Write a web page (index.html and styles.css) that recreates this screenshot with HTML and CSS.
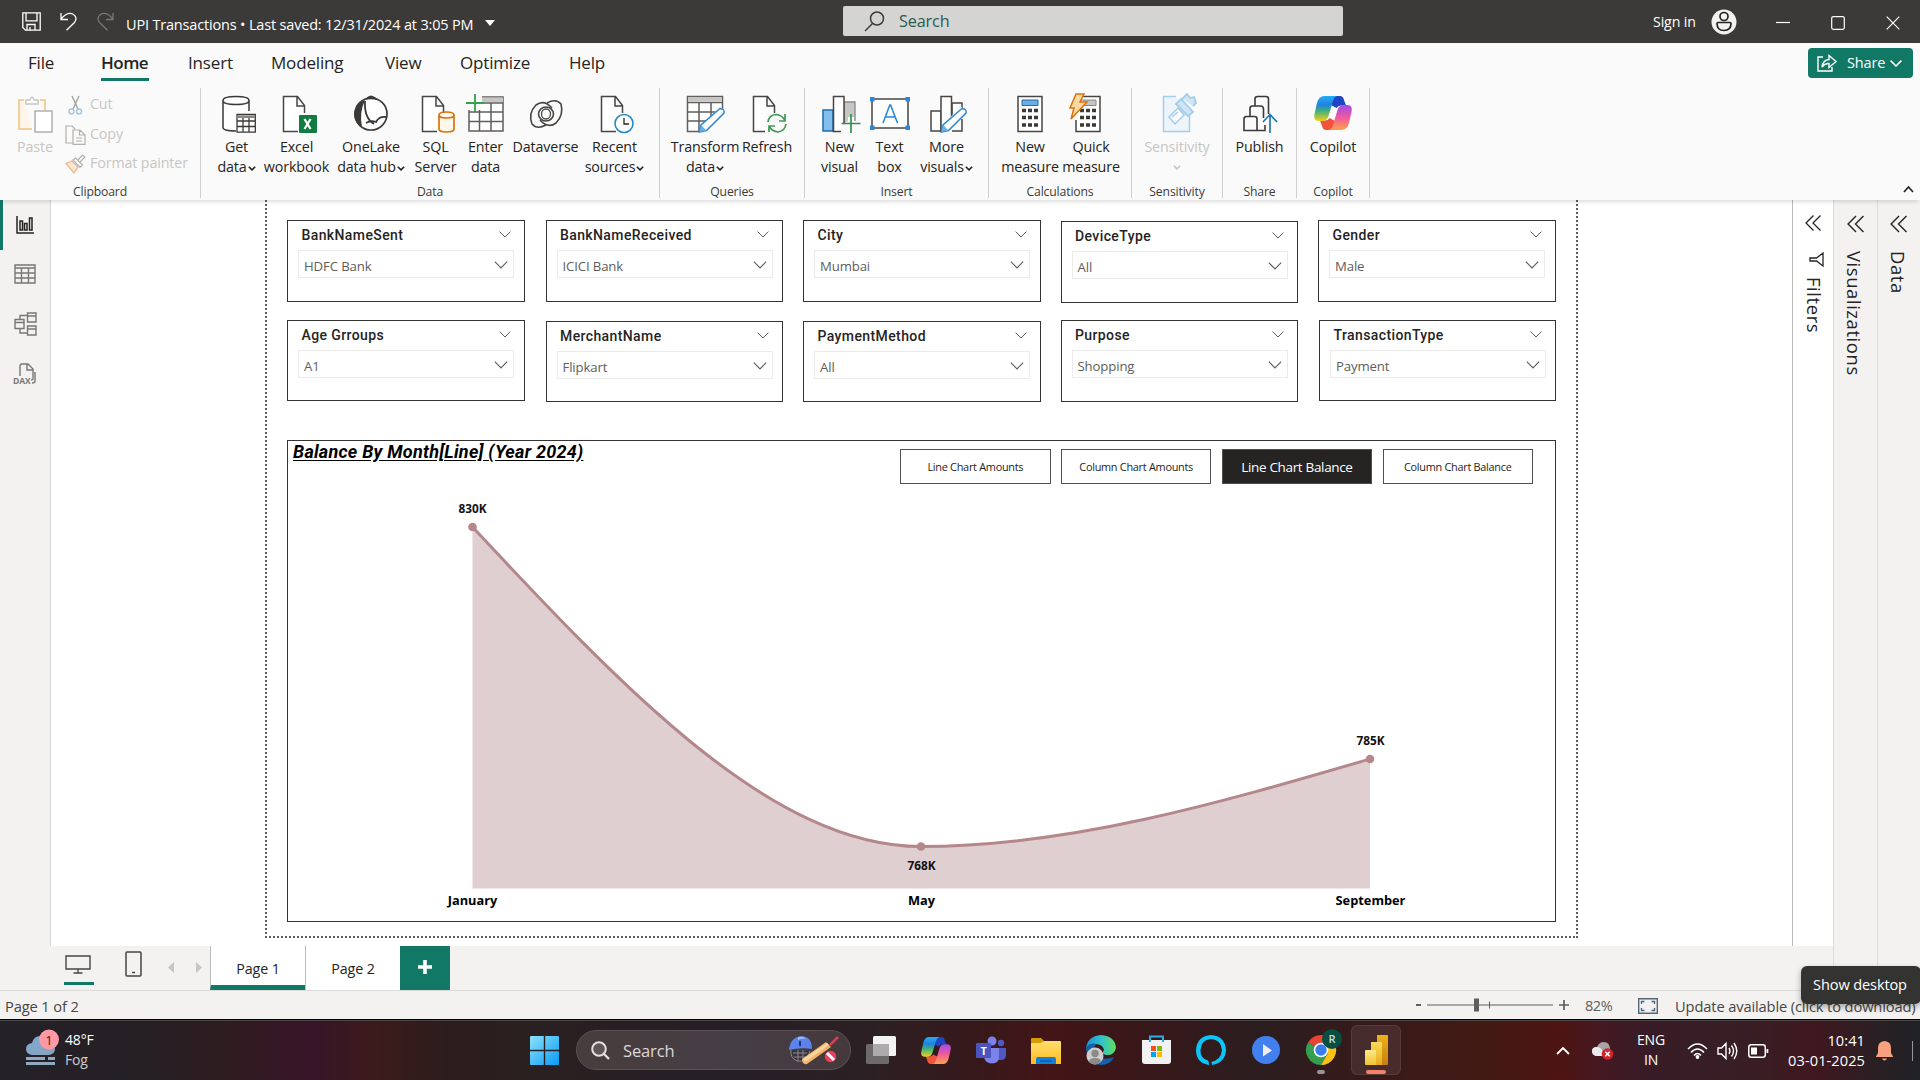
FILE: index.html
```html
<!DOCTYPE html>
<html lang="en">
<head>
<meta charset="utf-8">
<title>UPI Transactions</title>
<link rel="stylesheet" href="styles.css">
</head>
<body>
<svg width="0" height="0" class="defs">
  <defs>
    <linearGradient id="cpA" x1="0" y1="0" x2="0" y2="1"><stop offset="0" stop-color="#22aef5"/><stop offset=".35" stop-color="#2380e0"/><stop offset=".6" stop-color="#3fb27a"/><stop offset="1" stop-color="#f5cf1b"/></linearGradient>
    <linearGradient id="cpB" x1="0" y1="0" x2="0" y2="1"><stop offset="0" stop-color="#a24be8"/><stop offset=".5" stop-color="#ee5a9c"/><stop offset="1" stop-color="#ffa24a"/></linearGradient>
    <linearGradient id="win" x1="0" y1="0" x2="1" y2="1"><stop offset="0" stop-color="#8be2fb"/><stop offset="1" stop-color="#0a9bf5"/></linearGradient>
    <linearGradient id="fold" x1="0" y1="0" x2="0" y2="1"><stop offset="0" stop-color="#ffdf6e"/><stop offset="1" stop-color="#fdbb20"/></linearGradient>
    <linearGradient id="edge" x1="0" y1="0" x2="1" y2="0"><stop offset="0" stop-color="#1b8fd8"/><stop offset=".5" stop-color="#2fc2cf"/><stop offset="1" stop-color="#62de5a"/></linearGradient>
    <linearGradient id="cloud" x1="0" y1="0" x2="1" y2="1"><stop offset="0" stop-color="#7da9d6"/><stop offset="1" stop-color="#8aa2bb"/></linearGradient>
    <linearGradient id="bar" x1="0" y1="0" x2="0" y2="1"><stop offset="0" stop-color="#edb31a"/><stop offset="1" stop-color="#c77d10"/></linearGradient>
    <linearGradient id="bar2" x1="0" y1="0" x2="0" y2="1"><stop offset="0" stop-color="#f9dc5a"/><stop offset="1" stop-color="#e8a91c"/></linearGradient>
    <linearGradient id="bar3" x1="0" y1="0" x2="0" y2="1"><stop offset="0" stop-color="#fbea8a"/><stop offset="1" stop-color="#efc42e"/></linearGradient>
    <symbol id="chev" viewBox="0 0 12 7"><path d="M.6.6 6 6 11.4.6" fill="none" stroke="currentColor"/></symbol>
    <symbol id="caret" viewBox="0 0 8 5"><path d="M.8.8 4 3.9 7.2.8" fill="none" stroke="currentColor" stroke-width="1.6"/></symbol>
    <symbol id="dbl" viewBox="0 0 16 16"><path d="M8.5.5 1 8l7.500 7.500M15.500.5 8 8l7.500 7.500" fill="none" stroke="#252423" stroke-width="1.300"/></symbol>
    <symbol id="page" viewBox="0 0 38 38"><path d="M20 36.500H5.500V1.500h14l7 9V18M19 1.500V11h8" fill="#fff" stroke="#484644" stroke-width="1.500"/></symbol>
    <symbol id="copilot" viewBox="0 0 38 34">
      <path d="M19 0h7q3 0 4 4l2 5.500h-5q-3 0-4.500 2.500L17 9z" fill="#1f45c4"/>
      <path d="M19 34h-7q-3 0-4-4l-2-5.500h5q3 0 4.500-2.500L21 25z" fill="#f1543a"/>
      <path d="M10 0H23Q20 1 19 5L14.500 20Q13 25 8 25H5Q-1 25 .5 18L3 7Q5 0 10 0z" fill="url(#cpA)"/>
      <path d="M28 34H15Q18 33 19 29L23.500 14Q25 9 30 9H33Q39 9 37.500 16L35 27Q33 34 28 34z" fill="url(#cpB)"/>
    </symbol>
    <symbol id="calc" viewBox="0 0 38 38">
      <rect x="7" y="1.500" width="24" height="35" fill="#fff" stroke="#484644" stroke-width="1.500"/>
      <path d="M11 15.500h4M17 15.500h4M23 15.500h4M11 22.500h4M17 22.500h4M23 22.500h4M11 30h4M17 30h4M23 30h4" stroke="#3b3a39" stroke-width="3.500"/>
    </symbol>
  </defs>
</svg>

<div class="app">
<header class="titlebar">
  <svg class="tb-save" width="19" height="19" viewBox="0 0 19 19"><path d="M.8.8h17.400v17.400H3.500L.8 15.500zM4 .8v8h11v-8M5 18v-5.500h8V18M8 18v-3" fill="none" stroke="#fff" stroke-width="1.300"/></svg>
  <svg class="tb-undo" width="18" height="19" viewBox="0 0 18 19"><path d="M1 1v6.500h7M1 7Q8-1 13.500 2.500 18 6 14.500 10.500L6.500 18.300" fill="none" stroke="#fff" stroke-width="1.300"/></svg>
  <svg class="tb-redo" width="18" height="19" viewBox="0 0 18 19"><path d="M17 1v6.500h-7M17 7Q10-1 4.500 2.500 0 6 3.500 10.500l8 7.800" fill="none" stroke="#797775" stroke-width="1.300"/></svg>
  <span class="tb-title">UPI Transactions • Last saved: 12/31/2024 at 3:05 PM</span>
  <svg class="tb-drop" width="10" height="6" viewBox="0 0 10 6"><path d="M0 0h10L5 6z" fill="#fff"/></svg>
  <div class="tb-search">
    <svg width="21" height="21" viewBox="0 0 21 21"><circle cx="13" cy="7.500" r="6.500" fill="none" stroke="#3b3a39" stroke-width="1.500"/><path d="M8.500 12.500 1 20" stroke="#3b3a39" stroke-width="1.500"/></svg>
    <span>Search</span>
  </div>
  <span class="tb-sign">Sign in</span>
  <svg class="tb-user" width="26" height="26" viewBox="0 0 26 26"><circle cx="13" cy="13" r="12.500" fill="#f3f2f1"/><circle cx="13" cy="7.500" r="4" fill="none" stroke="#252423" stroke-width="1.700"/><path d="M6 14.500q0-1 1-1h12q1 0 1 1 0 7-7 7t-7-7z" fill="none" stroke="#252423" stroke-width="1.700"/></svg>
  <svg class="tb-min" width="14" height="14" viewBox="0 0 14 14"><path d="M0 7.500h14" stroke="#fff" stroke-width="1.200"/></svg>
  <svg class="tb-max" width="14" height="14" viewBox="0 0 14 14"><rect x=".7" y=".7" width="12.600" height="12.600" rx="1.500" fill="none" stroke="#fff" stroke-width="1.200"/></svg>
  <svg class="tb-close" width="14" height="14" viewBox="0 0 14 14"><path d="m.7.7 12.600 12.600M13.300.7.7 13.300" stroke="#fff" stroke-width="1.200"/></svg>
</header>

<nav class="menu">
  <span class="m-file">File</span><span class="m-home">Home</span><span class="m-insert">Insert</span><span class="m-model">Modeling</span><span class="m-view">View</span><span class="m-opt">Optimize</span><span class="m-help">Help</span>
  <button class="share">
    <svg width="20" height="18" viewBox="0 0 20 18"><path d="M6 3H1v14h14v-4M5 13Q6 6 12 5.500V1.500l7 6-7 6V9.500Q8 9 5 13z" fill="none" stroke="#fff" stroke-width="1.400"/></svg>
    <span>Share</span><svg width="12" height="7"><use href="#chev" stroke-width="1.500"/></svg>
  </button>
</nav>

<section class="ribbon">
  <div class="group g-clip">
    <div class="tools">
      <div class="tool dim w-paste">
        <svg width="38" height="38" viewBox="0 0 38 38"><path d="M8 5H3v29h13M24 5h5v10" fill="#fff6e8" stroke="#f3cf9f" stroke-width="2"/><path d="M10 9V5h4q2-6 4 0h4v4z" fill="#fff" stroke="#c8c6c4" stroke-width="1.500"/><rect x="19" y="16" width="17" height="21" fill="#fff" stroke="#b3b0ad" stroke-width="1.500"/></svg>
        <span>Paste</span>
      </div>
      <div class="clip-list">
        <div><svg width="21" height="20" viewBox="0 0 21 20"><path d="m7 1 6 13M14 1 8 14" stroke="#a19f9d" stroke-width="1.300"/><circle cx="6.500" cy="16.500" r="2.500" fill="none" stroke="#a3c9e0" stroke-width="1.500"/><circle cx="14" cy="16.500" r="2.500" fill="none" stroke="#a3c9e0" stroke-width="1.500"/></svg><span>Cut</span></div>
        <div><svg width="21" height="20" viewBox="0 0 21 20"><path d="M8 18H1V1h6l3 3M8 5h7l5 5v9.300H8zM14.500 5v5H20M11 13h6M11 16h6" fill="none" stroke="#b3b0ad" stroke-width="1.200"/></svg><span>Copy</span></div>
        <div><svg width="21" height="20" viewBox="0 0 21 20"><path d="M1 9.500 7 7l6 6-4 6z" fill="#fbe6d0" stroke="#eab98c" stroke-width="1.300"/><path d="m8 6 2.500-2 7 7L15 13.500zM13 6l4.500-5 2.500 2-5 5" fill="#fff" stroke="#b3b0ad" stroke-width="1.200"/></svg><span>Format painter</span></div>
      </div>
    </div>
    <div class="glabel">Clipboard</div>
  </div>

  <div class="group g-data">
    <div class="tools">
      <div class="tool w54"><svg width="38" height="38" viewBox="0 0 38 38"><path d="M31 16V5.500Q31 1.500 18 1.500T5 5.500v27Q5 36 18 36M5 5.500Q5 9.500 18 9.500T31 5.500" fill="#fff" stroke="#3b3a39" stroke-width="1.500"/><path d="M19 19.500h18.300v17.700H19zM19 26h18M19 31.500h18M25 22v15M31 22v15" fill="#fff" stroke="#3b3a39" stroke-width="1.300"/><path d="M19.500 20.500h17.500v2.500H19.500z" fill="#8a8886"/></svg><span>Get</span><span>data<svg class="ct"><use href="#caret"/></svg></span></div>
      <div class="tool w66"><svg width="38" height="38"><use href="#page"/><rect x="21" y="20" width="18" height="18" rx="1" fill="#107c41"/><path d="m26.500 24 6 10M32.500 24l-6 10" stroke="#fff" stroke-width="2.300"/></svg><span>Excel</span><span>workbook</span></div>
      <div class="tool w83"><svg width="38" height="38" viewBox="0 0 38 38"><circle cx="19" cy="19" r="16" fill="#fff" stroke="#3b3a39" stroke-width="1.700"/><path d="M13 5q2-4 6-4.500 5 1 7 5-6-2-13-.5z" fill="#3b3a39"/><path d="M13 5Q3 8 2 20q1 9 8 12-3-14 3-27z" fill="#3b3a39"/><path d="M13 6q-1 17 9 23M14 28q5-3 10-1 3-6 10-5" fill="none" stroke="#3b3a39" stroke-width="1.800"/></svg><span>OneLake</span><span>data hub<svg class="ct"><use href="#caret"/></svg></span></div>
      <div class="tool w46"><svg width="38" height="38"><use href="#page"/><path d="M22 20v14q0 3 7.500 3t7.500-3V20q0-3-7.500-3T22 20zq0 3 7.500 3t7.500-3" fill="#fff6ec" stroke="#d9730d" stroke-width="1.700"/></svg><span>SQL</span><span>Server</span></div>
      <div class="tool w54"><svg width="38" height="38" viewBox="0 0 38 38"><path d="M2 2h34v34H2zM2 8h34M2 17h34M2 26.500h34M12.500 8v28M24 8v28" fill="#fff" stroke="#605e5c" stroke-width="1.500"/><path d="M12 2.500h24V7H12z" fill="#c8c6c4"/><path d="M0 0h15v15H0z" fill="#fafafa"/><path d="M8-1v18M-1 8h18" stroke="#31a24c" stroke-width="1.800"/></svg><span>Enter</span><span>data</span></div>
      <div class="tool w66"><svg width="38" height="38" viewBox="0 0 38 38"><path d="M25 13q-8-9-16-3-8 8-4 19 5 6 14 1M13 25q8 9 16 3 8-8 5-19-5-6-14-1" fill="none" stroke="#484644" stroke-width="1.600"/><ellipse cx="19" cy="19" rx="7.500" ry="7" fill="none" stroke="#484644" stroke-width="1.600"/><ellipse cx="19" cy="19" rx="4.500" ry="5" fill="none" stroke="#484644" stroke-width="1.300"/></svg><span>Dataverse</span></div>
      <div class="tool w72"><svg width="38" height="38"><use href="#page"/><circle cx="28" cy="28.500" r="9" fill="#fff" stroke="#2b88c6" stroke-width="1.600"/><path d="M28 23v6h5" fill="none" stroke="#252423" stroke-width="1.300"/></svg><span>Recent</span><span>sources<svg class="ct"><use href="#caret"/></svg></span></div>
    </div>
    <div class="glabel">Data</div>
  </div>

  <div class="group g-query">
    <div class="tools">
      <div class="tool w70"><svg width="38" height="38" viewBox="0 0 38 38"><path d="M1.500 1.500h35v35h-35zM2 7.500h34M2 17h34M2 26h34M13 8v28M25 8v28" fill="#fff" stroke="#605e5c" stroke-width="1.500"/><path d="M2 2h34v4.500H2z" fill="#c8c6c4"/><path d="m14 38 3-9 17-17 6 4-2 22z" fill="#fafafa"/><path d="m15 30-1.500 7 7-1.500L38 18q1-4-4-4.500z" fill="#fff" stroke="#2b88d8" stroke-width="1.500"/><path d="m15 30-1.500 7 7-1.500z" fill="#69afe5"/></svg><span>Transform</span><span>data<svg class="ct"><use href="#caret"/></svg></span></div>
      <div class="tool w54"><svg width="38" height="38"><use href="#page"/><path d="M17 18h21v20H17z" fill="#fafafa"/><path d="M20 27q1-7 8-7.500 6 .5 9 6M37 19v7h-6M38 29q-1 7-8 8-6-.5-9-6M21 37v-6h6" fill="none" stroke="#3f9a55" stroke-width="1.700"/></svg><span>Refresh</span></div>
    </div>
    <div class="glabel">Queries</div>
  </div>

  <div class="group g-ins">
    <div class="tools">
      <div class="tool w54"><svg width="38" height="38" viewBox="0 0 38 38"><path d="M23 7h11v28H23z" fill="#c8c6c4" stroke="#8a8886" stroke-width="1.300"/><path d="M2 15h10v21H2z" fill="#83beec" stroke="#1f6cb0" stroke-width="1.500"/><path d="M12.500 1.500H23v35H12.500z" fill="#fff" stroke="#484644" stroke-width="1.500"/><path d="M27 26V22h6v4h5v12H20v-7z" fill="#fafafa"/><path d="M30 19v19M20.500 28.500h19" stroke="#31914c" stroke-width="1.700"/></svg><span>New</span><span>visual</span></div>
      <div class="tool w46"><svg width="40" height="38" viewBox="0 0 40 38"><rect x="2" y="4" width="36" height="29" fill="#fff" stroke="#484644" stroke-width="1.500"/><path d="M0 2h4.500v4.500H0zM35.500 2H40v4.500h-4.500zM0 30.500h4.500V35H0zM35.500 30.500H40V35h-4.500z" fill="#2b88d8"/><path d="m13 28 6.800-18h.8L27.500 28M15.500 22h9.500" fill="none" stroke="#2b88d8" stroke-width="1.600"/></svg><span>Text</span><span>box</span></div>
      <div class="tool w68"><svg width="38" height="38" viewBox="0 0 38 38"><path d="M24 8h10v28H24zM3 16h10v20H3z" fill="#fff" stroke="#484644" stroke-width="1.500"/><path d="M13 1.500h10.500v35H13z" fill="#fff" stroke="#484644" stroke-width="1.500"/><path d="m13 38 3-10 17-16 6 4-2 22z" fill="#fafafa"/><path d="M34 24v12H24" fill="none" stroke="#484644" stroke-width="1.500"/><path d="m15 30-1.500 7 7-1.500L38 18q1-4-4-4.500z" fill="#fff" stroke="#2b88d8" stroke-width="1.500"/><path d="m15 30-1.500 7 7-1.500z" fill="#69afe5"/></svg><span>More</span><span>visuals<svg class="ct"><use href="#caret"/></svg></span></div>
    </div>
    <div class="glabel">Insert</div>
  </div>

  <div class="group g-calc">
    <div class="tools">
      <div class="tool w62"><svg width="38" height="38"><use href="#calc"/><path d="M11 5h16v5.500H11z" fill="#69afe5" stroke="#1f6cb0"/></svg><span>New</span><span>measure</span></div>
      <div class="tool w60"><svg class="wide" width="38" height="38"><use href="#calc"/><path d="M12 5h15v5.500H12z" fill="#c8c6c4" stroke="#8a8886"/><path d="M0 0h14l-2 6h3L8 18v7H0z" fill="#fafafa"/><path d="M7-1h8l-4 8h7L2 24l3-11H1z" fill="#fcd9a0" stroke="#d9730d" stroke-width="1.500"/></svg><span>Quick</span><span>measure</span></div>
    </div>
    <div class="glabel">Calculations</div>
  </div>

  <div class="group g-sens">
    <div class="tools">
      <div class="tool dim w76"><svg width="38" height="38" viewBox="0 0 38 38"><path d="M18 1.500H5.500v35h26V19" fill="#edf5fb" stroke="#a3cdea" stroke-width="1.500"/><path d="m11 22 9-9 6 7-9 9zM14 22l6-5" fill="#fff" stroke="#a3cdea" stroke-width="1.500"/><path d="m18 9 5-5 12 13-5 4zM24 4l5-5 3 4 4-1 2 6-3 3" fill="#cfe5f5" stroke="#a3cdea" stroke-width="1.800"/></svg><span>Sensitivity</span><span><svg class="ct solo"><use href="#caret"/></svg></span></div>
    </div>
    <div class="glabel">Sensitivity</div>
  </div>

  <div class="group g-share">
    <div class="tools">
      <div class="tool w60"><svg width="38" height="38" viewBox="0 0 38 38"><path d="M14 11V4q0-2.500 2.500-2.500h8.500q2.500 0 2.500 2.500v15M9 21v-7.500q0-2.500 2.500-2.500h8q3 0 3 3v9M16 35.500H3V24q0-2.500 2.500-2.500h8q2.500 0 2.500 2.500zH24V30" fill="none" stroke="#3b3a39" stroke-width="1.600"/><path d="M29 38V19.500M22 27l7-7.500 7 7.500" fill="none" stroke="#1f78b4" stroke-width="1.700"/></svg><span>Publish</span></div>
    </div>
    <div class="glabel">Share</div>
  </div>

  <div class="group g-cop">
    <div class="tools"><div class="tool w60"><svg width="38" height="38" viewBox="0 0 38 38"><path d="M20 10h6l-6 15h-6z" fill="#fff"/><use href="#copilot" y="1" width="38" height="34"/></svg><span>Copilot</span></div></div>
    <div class="glabel">Copilot</div>
  </div>
  <svg class="collapse" width="11" height="8" viewBox="0 0 11 8"><path d="m1 7 4.500-5L10 7" fill="none" stroke="#252423" stroke-width="1.700"/></svg>
</section>

<main class="work">
  <div class="left">
    <div class="upper">
      <aside class="rail">
        <div class="on"><svg width="18" height="18" viewBox="0 0 18 18"><path d="M1 0v17h17M4 14V5h2.500v9zM8.500 14V7.500H11V14zM13.500 14V2H16v12z" fill="none" stroke="#252423" stroke-width="1.500"/></svg></div>
        <div><svg width="22" height="20" viewBox="0 0 22 20"><path d="M1 1h20v18H1zM1 4h20M1 9h20M1 14h20M7.500 4v15M14.500 4v15" fill="none" stroke="#797775" stroke-width="1.400"/></svg></div>
        <div><svg width="23" height="24" viewBox="0 0 23 24"><path d="M1 7.500h9v9H1zM1 10.500h9M13.500 1H22v9h-8.500zM13.500 4H22M13.500 14H22v9h-8.500zM13.500 17H22M6 7V3.500h7M6 17v4h7" fill="none" stroke="#797775" stroke-width="1.400"/></svg></div>
        <div><svg width="23" height="22" viewBox="0 0 23 22"><path d="M6 13V3q0-2 2-2h6l5 5v9q0 2-2 2M13 1v6h6M21 9v9q0 2-3 2" fill="none" stroke="#797775" stroke-width="1.400"/><text x="-1" y="21" class="dax">DAX</text></svg></div>
      </aside>
      <div class="stage">
        <div class="report">
          <div class="slicers">
            <div class="sl"><b>BankNameSent</b><svg class="c1"><use href="#chev"/></svg><p>HDFC Bank<svg class="c2"><use href="#chev"/></svg></p></div>
            <div class="sl"><b>BankNameReceived</b><svg class="c1"><use href="#chev"/></svg><p>ICICI Bank<svg class="c2"><use href="#chev"/></svg></p></div>
            <div class="sl"><b>City</b><svg class="c1"><use href="#chev"/></svg><p>Mumbai<svg class="c2"><use href="#chev"/></svg></p></div>
            <div class="sl low"><b>DeviceType</b><svg class="c1"><use href="#chev"/></svg><p>All<svg class="c2"><use href="#chev"/></svg></p></div>
            <div class="sl"><b>Gender</b><svg class="c1"><use href="#chev"/></svg><p>Male<svg class="c2"><use href="#chev"/></svg></p></div>
            <div class="sl r2"><b>Age Grroups</b><svg class="c1"><use href="#chev"/></svg><p>A1<svg class="c2"><use href="#chev"/></svg></p></div>
            <div class="sl r2 low"><b>MerchantName</b><svg class="c1"><use href="#chev"/></svg><p>Flipkart<svg class="c2"><use href="#chev"/></svg></p></div>
            <div class="sl r2 low"><b>PaymentMethod</b><svg class="c1"><use href="#chev"/></svg><p>All<svg class="c2"><use href="#chev"/></svg></p></div>
            <div class="sl tall"><b>Purpose</b><svg class="c1"><use href="#chev"/></svg><p>Shopping<svg class="c2"><use href="#chev"/></svg></p></div>
            <div class="sl r2 shift"><b>TransactionType</b><svg class="c1"><use href="#chev"/></svg><p>Payment<svg class="c2"><use href="#chev"/></svg></p></div>
          </div>
          <div class="panel">
            <div class="phead">
              <h2>Balance By Month[Line] (Year 2024)</h2>
              <div class="pbtns"><button>Line Chart Amounts</button><button>Column Chart Amounts</button><button class="sel">Line Chart Balance</button><button>Column Chart Balance</button></div>
            </div>
            <svg class="chart" width="1267" height="436" viewBox="288 485 1267 436">
              <path d="M472.500 527C622 687 771.500 846.500 921 846.500 1070.700 846.500 1220.300 802.700 1370 759V888.500H472.500z" fill="#dfcfd0"/>
              <path d="M472.500 527C622 687 771.500 846.500 921 846.500 1070.700 846.500 1220.300 802.700 1370 759" fill="none" stroke="#b4888b" stroke-width="3"/>
              <g fill="#b4888b"><circle cx="472.500" cy="527" r="4.300"/><circle cx="921" cy="846.500" r="4.300"/><circle cx="1370" cy="759" r="4.300"/></g>
              <g class="val"><text x="472.500" y="513">830K</text><text x="921.500" y="870">768K</text><text x="1370.500" y="745">785K</text></g>
              <g class="cat"><text x="472.500" y="905">January</text><text x="921.500" y="905">May</text><text x="1370.500" y="905">September</text></g>
            </svg>
          </div>
        </div>
      </div>
      <aside class="filters">
        <svg width="16" height="18"><use href="#dbl"/></svg>
        <svg class="fun" width="15" height="15" viewBox="0 0 15 15"><path d="M14 1v13L7.500 9H1V6h6.500z" fill="none" stroke="#252423" stroke-width="1.300"/></svg>
        <span>Filters</span>
      </aside>
    </div>
    <div class="tabs">
      <div class="view"><svg width="26" height="19" viewBox="0 0 26 19"><path d="M1 1h24v13H1zM13 14v4M8.500 18h9" fill="none" stroke="#484644" stroke-width="1.400"/></svg></div>
      <svg class="phone" width="17" height="26" viewBox="0 0 17 26"><rect x="1" y="1" width="15" height="24" rx="1" fill="none" stroke="#484644" stroke-width="1.500"/><path d="M7 21.500h3" stroke="#484644" stroke-width="1.500"/></svg>
      <svg class="prev" width="6" height="11"><path d="M6 0v11L0 5.500z" fill="#c8c6c4"/></svg>
      <svg class="next" width="6" height="11"><path d="M0 0v11l6-5.500z" fill="#c8c6c4"/></svg>
      <div class="tab cur">Page 1</div><div class="tab">Page 2</div>
      <div class="add"><svg width="14" height="14"><path d="M7 0v14M0 7h14" stroke="#fff" stroke-width="3.600"/></svg></div>
    </div>
  </div>
  <aside class="pane"><svg width="17" height="18"><use href="#dbl"/></svg><span>Visualizations</span></aside>
  <aside class="pane last"><svg width="17" height="18"><use href="#dbl"/></svg><span>Data</span></aside>
</main>

<footer class="status">
  <span class="s-page">Page 1 of 2</span>
  <span class="s-minus"></span>
  <svg class="s-zoom" width="126" height="14"><path d="M0 7h126" stroke="#605e5c" stroke-width="1.200"/><path d="M47 .5h5v13h-5z" fill="#605e5c"/><path d="M62.500 3.500v7" stroke="#605e5c"/></svg>
  <svg class="s-plus" width="10" height="10"><path d="M5 0v10M0 5h10" stroke="#605e5c" stroke-width="1.700"/></svg>
  <span class="s-pct">82%</span>
  <svg class="s-fit" width="20" height="16" viewBox="0 0 20 16"><path d="M.7.7h18.600v14.600H.7zM3.500 6V3.500h3M13.500 3.500h3V6M3.500 10v2.500h3M13.500 12.500h3V10" fill="none" stroke="#53667a" stroke-width="1.400"/></svg>
  <span class="s-upd">Update available (click to download)</span>
</footer>

<footer class="taskbar">
  <div class="weather">
    <svg width="34" height="36" viewBox="0 0 34 36"><path d="M7 26q-6-1-6-6t6-6q2-8 10-7 6 1 7 7 6 1 6 6t-6 6z" fill="url(#cloud)"/><path d="M1 28h19v3H1zM23 28h7v3h-7zM1 33h29v3H1z" fill="#90a9c2"/><circle cx="24" cy="10.500" r="10" fill="#ff99a4"/><text x="24" y="15.500" class="one">1</text></svg>
    <div><span>48°F</span><span class="fog">Fog</span></div>
  </div>
  <svg class="start" width="29" height="29" viewBox="0 0 29 29"><path d="M0 1q0-1 1-1h12.800v13.800H0zM15.200 0H28q1 0 1 1v12.800H15.200zM0 15.200h13.800V29H1q-1 0-1-1zM15.200 15.200H29V28q0 1-1 1H15.200z" fill="url(#win)"/></svg>
  <div class="tsearch">
    <svg width="19" height="19" viewBox="0 0 19 19"><circle cx="8" cy="8" r="6.800" fill="#ffffff22" stroke="#e4e0e2" stroke-width="2"/><path d="m13 13 5 5" stroke="#e4e0e2" stroke-width="2.300"/></svg>
    <span>Search</span>
    <svg width="50" height="30" viewBox="0 0 50 30"><path d="M2 15q-1 8 6 11 10 2 13-10" fill="#39343c" stroke="#8b868d"/><path d="M4 18h14M5 22h12M9 15v11M14 15v10" stroke="#8b868d"/><path d="M0 15Q1 2 13 1q10 1 10 13-11-2-23 1z" fill="#5b83ea"/><path d="M9 2q5-1 8 2-5-1-8 1z" fill="#9cb9fb"/><ellipse cx="11" cy="8.500" rx="1" ry="3" fill="#1e2d66"/><path d="m41 10 8-8" stroke="#e03a55" stroke-width="2.500"/><path d="M13 24 37 7l5 5-24 17q-5 1-5-5z" fill="#f1b468"/><path d="m14 24 24-16 2 2-24 17z" fill="#fad49b"/><circle cx="41.500" cy="21.500" r="5.700" fill="#ee3d5c"/><path d="m38 18 7 7" stroke="#fff" stroke-width="3"/></svg>
  </div>
  <div class="apps">
    <div><svg width="30" height="28" viewBox="0 0 30 28"><rect x="0" y="8" width="23" height="20" rx="1.500" fill="#6c6a6b"/><rect x="7" y="0" width="23" height="20" rx="1.500" fill="#f3f3f3"/><path d="M7 8h16v12H7z" fill="#adabac"/></svg></div>
    <div><svg width="30" height="27"><use href="#copilot"/></svg></div>
    <div><svg width="30" height="28" viewBox="0 0 30 28"><circle cx="25" cy="7" r="3.200" fill="#5058c4"/><path d="M22 12h8v7q0 5-5 5h-3z" fill="#5058c4"/><circle cx="16" cy="5" r="4.500" fill="#7b83eb"/><path d="M8 12h15v9q0 6-7 6.500-7-.5-8-6.500z" fill="#7b83eb"/><rect x="0" y="7" width="15" height="15" rx="1" fill="#4b53bc"/><text x="7.500" y="19" class="tee">T</text></svg></div>
    <div><svg width="30" height="27" viewBox="0 0 30 27"><path d="M0 2q0-1 1-1h9l4 4v6H0z" fill="#d99a08"/><path d="M0 7q0-1 1-1h9l3-2h16q1 0 1 1v22H0z" fill="url(#fold)"/><path d="M5 27v-5q0-2 2-2h16q2 0 2 2v5z" fill="#1680d8"/><path d="M9 24h12" stroke="#0b4b9c"/></svg></div>
    <div><svg width="30" height="30" viewBox="0 0 30 30"><path d="M0 14Q1 1 15 0q14 1 15 13-2 8-10 7-5-1-2-5-1-6-9-6Q2 9 0 14z" fill="url(#edge)"/><path d="M0 14q3-7 10-5Q6 14 11 21q8 5 17 1-4 8-13 8Q2 29 0 14z" fill="#1261ab"/><circle cx="9" cy="21" r="8.500" fill="#cfcdcc"/><circle cx="9" cy="18.500" r="3.700" fill="#8c8a89"/><path d="M3 27q0-4 6-4t6 4q-6 5-12 0z" fill="#8c8a89"/></svg></div>
    <div><svg width="29" height="30" viewBox="0 0 29 30"><path d="M8 7V1.500h13V7" fill="none" stroke="#27b0e8" stroke-width="2"/><path d="M0 5h29v21q0 3-3 3H3q-3 0-3-3z" fill="#f1f1f1"/><path d="M9 11h5v5H9z" fill="#f25022"/><path d="M15 11h5v5h-5z" fill="#7fba00"/><path d="M9 17h5v5H9z" fill="#00a4ef"/><path d="M15 17h5v5h-5z" fill="#ffb900"/><path d="M8 7V4M21 7V4" stroke="#27b0e8" stroke-width="2"/></svg></div>
    <div><svg width="30" height="30" viewBox="0 0 30 30"><path d="M13 30Q0 28 0 15 1 1 15 0q14 1 15 15-1 13-14 15 0-2-1-3 10-2 11-12Q25 4.500 15 4 5 4.500 4.500 15 4 23 12 25.500q1 1 1 4.500z" fill="#0cc5f8"/></svg></div>
    <div><svg width="28" height="28" viewBox="0 0 28 28"><circle cx="14" cy="14" r="14" fill="#4180ee"/><path d="m11 8 9 6.500-9 6z" fill="#eee"/></svg></div>
    <div class="chrome"><svg width="36" height="36" viewBox="0 0 36 36"><path d="M15 21 2 13.500A15 15 0 0 1 28 13.500z" fill="#e94335"/><path d="M15 21 2 13.500A15 15 0 0 0 15 36l6.500-11.500z" fill="#34a04f"/><path d="M15 14h13.500A15 15 0 0 1 15 36l7-12z" fill="#fbc116"/><circle cx="15" cy="21" r="7.300" fill="#fff"/><circle cx="15" cy="21" r="5.700" fill="#3b7ded"/><circle cx="26" cy="10" r="10" fill="#064f42"/><text x="26" y="14" class="arr">R</text></svg><i></i></div>
    <div class="pbi"><svg width="23" height="30" viewBox="0 0 23 30"><path d="M12 0h10q1 0 1 1v28q0 1-1 1H12z" fill="url(#bar)"/><path d="M6 7h10q1 0 1 1v22H6z" fill="url(#bar2)"/><path d="M0 16q0-1 1-1h9q1 0 1 1v14H1q-1 0-1-1z" fill="url(#bar3)"/></svg><i></i></div>
  </div>
  <div class="tray">
    <svg class="t-up" width="14" height="9"><path d="m1 8 6-6 6 6" fill="none" stroke="#fff" stroke-width="1.900"/></svg>
    <svg class="t-od" width="22" height="18" viewBox="0 0 22 18"><path d="M4 14q-4-1-4-5 0-4 5-4 2-5 7-5 5 0 6 6v8z" fill="#a9a3a6"/><path d="M4 14q-4-1-4-5 0-4 5-4 5 0 8 9z" fill="#ece9ea"/><circle cx="15.500" cy="12" r="5.800" fill="#d1242f"/><path d="m13.300 9.800 4.400 4.400M17.700 9.800l-4.400 4.400" stroke="#fff" stroke-width="1.500"/></svg>
    <div class="t-lang"><span>ENG</span><span>IN</span></div>
    <svg class="t-wifi" width="21" height="16" viewBox="0 0 21 16"><path d="M1 6q9.500-10 19 0M4 9.500q6.500-7 13 0M7 12.500q3.500-4 7 0" fill="none" stroke="#fff" stroke-width="1.500"/><circle cx="10.500" cy="14" r="1.900" fill="#fff"/></svg>
    <svg class="t-vol" width="21" height="18" viewBox="0 0 21 18"><path d="M1 6h3.500L9 1.500v15L4.500 12H1zM12 6q2 3 0 6M14.500 3.500q4 5.500 0 11M17 1q5.500 8 0 16" fill="none" stroke="#fff" stroke-width="1.400"/></svg>
    <svg class="t-bat" width="21" height="14" viewBox="0 0 21 14"><rect x=".8" y=".8" width="16.500" height="12.400" rx="2.500" fill="none" stroke="#fff" stroke-width="1.500"/><path d="M3 3.500h6v7H3zM18.500 5h1.800v4h-1.800z" fill="#fff"/></svg>
    <div class="t-clock"><span>10:41</span><span>03-01-2025</span></div>
    <svg class="t-bell" width="17" height="20" viewBox="0 0 17 20"><path d="M8.500 0q6.500.5 6.500 7v5l2 3.500v.5H0v-.5L2 12V7Q2 .5 8.500 0zM6 17.500h5q-.500 2-2.500 2T6 17.500z" fill="#f9a07f"/></svg>
    <i class="t-edge"></i>
  </div>
</footer>
<div class="tip">Show desktop</div>
</div>
</body>
</html>
```
FILE: styles.css
```css
* { box-sizing: border-box; }
body { margin: 0; font-family: "Open Sans", "Noto Sans", sans-serif; font-size: 14px; color: #252423; letter-spacing: -0.01em; }
svg { flex: none; overflow: visible; display: block; }
button { font: inherit; letter-spacing: inherit; padding: 0; margin: 0; border: 0; }
span { white-space: nowrap; }
.defs { position: absolute; }
.app { position: relative; width: 1920px; height: 1080px; overflow: hidden; display: flex; flex-direction: column; background: #fff; }

.titlebar { height: 43px; flex: none; background: #3b3a38; color: #fff; display: flex; align-items: center; padding-left: 22px; }
.tb-undo { margin-left: 19px; }
.tb-redo { margin-left: 18px; }
.tb-title { width: 350px; margin: 5px 0 0 12px; font-size: 14.500px; letter-spacing: -0.012em; }
.tb-drop { margin: 2px 0 0 9px; }
.tb-search { width: 500px; height: 30px; margin: -1px 0 0 348px; padding-left: 21px; background: #d4d4d2; border-radius: 2px; display: flex; align-items: center; gap: 14px; color: #2b5a50; font-size: 16.200px; }
.tb-sign { width: 46px; margin-left: 310px; font-size: 14.200px; }
.tb-user { margin-left: 12px; }
.tb-min { margin-left: 39px; }
.tb-max { margin: 3px 0 0 41px; }
.tb-close { margin: 3px 0 0 41px; }

.menu { height: 45px; flex: none; background: #fafafa; display: flex; padding: 5px 0 0 28px; font-size: 17px; letter-spacing: -0.01em; line-height: 30px; }
.menu > span { height: 33px; }
.m-file { width: 26px; }
.m-home { margin-left: 47px; width: 48px; font-weight: 600; letter-spacing: -0.03em; border-bottom: 3px solid #117865; }
.m-insert { margin-left: 39px; width: 43px; }
.m-model { margin-left: 40px; width: 74px; }
.m-view { margin-left: 40px; width: 36px; }
.m-opt { margin-left: 39px; width: 70px; }
.m-help { margin-left: 39px; width: 37px; }
.share { margin: 0 7px 0 auto; width: 105px; height: 30px; border-radius: 4px; background: #117865; color: #fff; font-size: 14.500px; display: flex; align-items: center; padding-left: 9px; }
.share span { width: 38px; margin: 0 5px 0 10px; }

.ribbon { height: 112px; flex: none; background: #fafafa; display: flex; position: relative; z-index: 2; box-shadow: 0 4px 4px -2px #0002; }
.group { height: 110px; border-right: 1px solid #d2d0ce; display: flex; flex-direction: column; align-items: center; }
.g-clip { width: 201px; } .g-data { width: 459px; } .g-query { width: 145px; } .g-ins { width: 184px; }
.g-calc { width: 143px; } .g-sens { width: 91px; } .g-share { width: 74px; } .g-cop { width: 73px; }
.tools { height: 94px; flex: none; display: flex; justify-content: center; padding-top: 7px; }
.g-clip .tools { width: 200px; justify-content: flex-start; }
.tool { display: flex; flex-direction: column; align-items: center; line-height: 20px; font-size: 14.300px; }
.tool > span { height: 20px; display: flex; align-items: center; }
.tool > svg { margin-bottom: 4px; }
.tool .wide { transform: translateX(-3px); }
.dim { color: #c8c6c4; }
.w-paste { width: 65px; padding-left: 5px; }
.w46 { width: 46px; } .w54 { width: 54px; } .w60 { width: 60px; } .w62 { width: 62px; } .w66 { width: 66px; }
.w68 { width: 68px; } .w70 { width: 70px; } .w72 { width: 72px; } .w76 { width: 76px; } .w83 { width: 83px; }
.ct { width: 8px; height: 5px; margin: 3px 0 0 1px; }
.ct.solo { margin: 0; }
.clip-list { color: #c8c6c4; display: flex; flex-direction: column; }
.clip-list div { height: 29.500px; flex: none; display: flex; align-items: flex-start; gap: 4px; line-height: 18px; font-size: 14.300px; }
.glabel { font-size: 12.200px; line-height: 20px; color: #3b3a39; }
.collapse { margin: 97px 6px 0 auto; }

.work { height: 790px; flex: none; display: flex; }
.left { width: 1833px; display: flex; flex-direction: column; }
.upper { height: 746px; display: flex; }
.rail { width: 51px; background: #f3f2f1; border-right: 1px solid #d8d6d4; display: flex; flex-direction: column; box-shadow: 0 44px 0 #f3f2f1; }
.rail div { height: 50px; display: flex; align-items: center; justify-content: center; padding-bottom: 2px; }
.rail .on { border-left: 3px solid #117865; padding: 0 3px 0 0; }
.dax { font-size: 8.500px; font-weight: 700; fill: #797775; stroke: #f3f2f1; stroke-width: 2px; paint-order: stroke; }
.stage { width: 1741px; padding-left: 214px; }
.report { width: 1313px; height: 738px; padding: 20px 0 0 22px;
  background:
    repeating-linear-gradient(#605e5c 0 2px, transparent 2px 4px) 0 0 / 2px 100% no-repeat,
    repeating-linear-gradient(#605e5c 0 2px, transparent 2px 4px) 100% 0 / 2px 100% no-repeat,
    repeating-linear-gradient(90deg, #605e5c 0 2px, transparent 2px 4px) 0 100% / 100% 2px no-repeat; }
.slicers { display: grid; grid-template-columns: 258.500px 257.500px 257.500px 257.500px 239px; grid-template-rows: 100px 120px; }
.sl { width: 237.500px; height: 82px; border: 1px solid #353432; display: flex; flex-wrap: wrap; align-content: flex-start; padding: 4px 9px 0 10px; background: #fff; }
.low { margin-top: 1px; }
.r2 { height: 81px; }
.shift { margin-left: 1px; width: 237px; }
.sl b { flex: 1; padding-left: 3.500px; font: 500 14px/20px Roboto, sans-serif; letter-spacing: 0.028em; height: 25px; }
.c1 { width: 12px; height: 7px; margin: 6px 4px 0 0; color: #605e5c; }
.sl p { margin: 0; width: 216px; height: 28px; border: 1px solid #ecebea; display: flex; align-items: center; justify-content: space-between; padding: 3px 5px 0 5px; font-size: 13.200px; color: #605e5c; }
.c2 { width: 14px; height: 8px; margin-top: -2px; }
.panel { width: 1269px; height: 482px; border: 1px solid #353432; background: #fff; }
.phead { height: 44px; display: flex; justify-content: space-between; padding: 0 22px 0 5px; }
.phead h2 { margin: 1px 0 0; font: italic 700 18px/20px Roboto, sans-serif; text-decoration: underline; text-underline-offset: 2px; letter-spacing: 0.014em; color: #000; }
.pbtns { display: flex; gap: 10.300px; padding-top: 8px; }
.pbtns button { width: 150.500px; height: 35px; border: 1px solid #53514f; background: #fff; color: #252423; font-size: 10.900px; letter-spacing: -0.025em; }
.pbtns .sel { background: #252423; color: #fff; font-size: 13.500px; }
.chart { display: block; }
.val text, .cat text { text-anchor: middle; font-weight: 700; font-size: 11.800px; letter-spacing: 0; fill: #111; }
.cat text { font-size: 12.800px; fill: #000; }
.filters { width: 41px; border-left: 1px solid #bdbbb9; padding-top: 14px; display: flex; flex-direction: column; align-items: center; background: #fff; }
.fun { margin: 20px 0 0 6px; }
.filters span, .pane span { writing-mode: vertical-rl; font-size: 18.500px; line-height: 24px; font-weight: 500; letter-spacing: 0.03em; }
.filters span { margin: 10px 0 0 2px; }
.pane { flex: 1; background: #f3f2f1; border-left: 1px solid #dddbd9; padding-top: 15px; display: flex; flex-direction: column; align-items: center; }
.pane span { margin: 18px 3px 0 0; }
.pane.last span { margin-right: 1px; }

.tabs { height: 44px; background: #f3f2f1; margin-left: 51px; display: flex; }
.view { width: 30px; height: 39px; margin-left: 13px; padding: 9px 0 0 1px; border-bottom: 3px solid #117865; }
.phone { margin: 5px 0 0 31px; }
.prev { margin: 16px 0 0 26px; }
.next { margin: 16px 0 0 22px; }
.tab { width: 95px; height: 44px; border-left: 1px solid #bdbbb9; background: #fff; text-align: center; line-height: 45px; font-size: 14.300px; }
.tab.cur { margin-left: 8px; border-bottom: 5px solid #117865; font-weight: 500; }
.add { width: 50px; background: #117865; display: flex; align-items: center; justify-content: center; padding-bottom: 3px; }

.status { height: 30px; flex: none; background: #f3f2f1; border-top: 1px solid #dddbd9; border-bottom: 1px solid #000; display: flex; align-items: center; padding-left: 5px; color: #484644; font-size: 14.700px; }
.s-page { width: 1411px; padding-top: 2px; }
.s-minus { width: 5px; height: 2px; background: #605e5c; }
.s-zoom { margin-left: 6px; }
.s-plus { margin-left: 6px; }
.s-pct { width: 29px; margin-left: 16px; font-size: 14.500px; letter-spacing: -0.03em; color: #605e5c; }
.s-fit { margin: 1px 17px 0 24px; }
.s-upd { padding-top: 2px; }
.tip { position: absolute; left: 1801px; top: 966px; width: 120px; height: 38px; border-radius: 6px; background: #333332; color: #fff; text-align: center; line-height: 36px; font-size: 14.600px; padding-right: 2px; z-index: 3; box-shadow: 0 3px 6px #0005; }

.taskbar { height: 60px; flex: none; display: flex; align-items: center; color: #fff; border-top: 1px solid #4a4546;
  background: linear-gradient(90deg, #242128 0, #262024 150px, #2e1c20 230px, #371428 310px, #3c1b1b 375px, #2b1d1c 450px, #2b2020 520px, #251f26 700px, #2b2024 860px, #351a1c 960px, #431517 1050px, #3d1618 1100px, #2b1d1f 1260px, #3a1a18 1400px, #421a14 1480px, #4d1412 1560px, #451822 1600px, #371c27 1650px, #381e24 1750px, #40171f 1815px, #292024 1880px, #202124 1920px); }
.weather { width: 530px; padding-left: 25px; display: flex; align-items: center; gap: 6px; }
.weather span, .t-lang span, .t-clock span { display: block; line-height: 20px; }
.weather > div, .t-lang, .t-clock { padding-bottom: 2px; }
.weather svg { margin-top: -8px; }
.fog { color: #cfcbcd; }
.one { font-size: 13px; text-anchor: middle; fill: #252423; }
.tsearch { width: 275px; height: 40px; margin: -1px 0 0 17px; border-radius: 20px; background: linear-gradient(90deg, #483d3d, #453e45 60%, #46393c); border: 1px solid #5b5154; display: flex; align-items: center; padding-left: 14px; color: #dcd7d9; font-size: 16.500px; }
.tsearch span { width: 51px; margin: 0 115px 0 13px; }
.apps { display: flex; margin: -1px 0 0 5px; height: 50px; }
.apps div { width: 50px; margin-right: 5px; display: flex; align-items: center; justify-content: center; position: relative; }
.apps .chrome svg { margin: -6px 0 0 6px; }
.apps .pbi { background: #ffffff14; border: 1px solid #ffffff14; border-radius: 6px; }
.apps i { position: absolute; bottom: 1px; left: 21px; width: 8px; height: 4px; border-radius: 2px; background: #9a9294; }
.apps .pbi i { left: 14px; bottom: 0; width: 20px; background: #f4826a; }
.tee { font-size: 11px; font-weight: 700; text-anchor: middle; fill: #fff; }
.arr { font-size: 11px; font-weight: 600; text-anchor: middle; fill: #c9dbd7; }
.tray { display: flex; align-items: center; margin-left: 150px; }
.t-od { margin-left: 22px; }
.t-lang { width: 40px; text-align: center; margin-left: 17px; }
.t-wifi { margin-left: 16px; }
.t-vol { margin-left: 9px; }
.t-bat { margin-left: 10px; }
.t-clock { width: 90px; margin-left: 6px; text-align: right; font-size: 14.600px; letter-spacing: 0.005em; }
.t-bell { margin-left: 11px; }
.t-edge { width: 1px; height: 20px; background: #9a9698; margin-left: 19px; }
```
